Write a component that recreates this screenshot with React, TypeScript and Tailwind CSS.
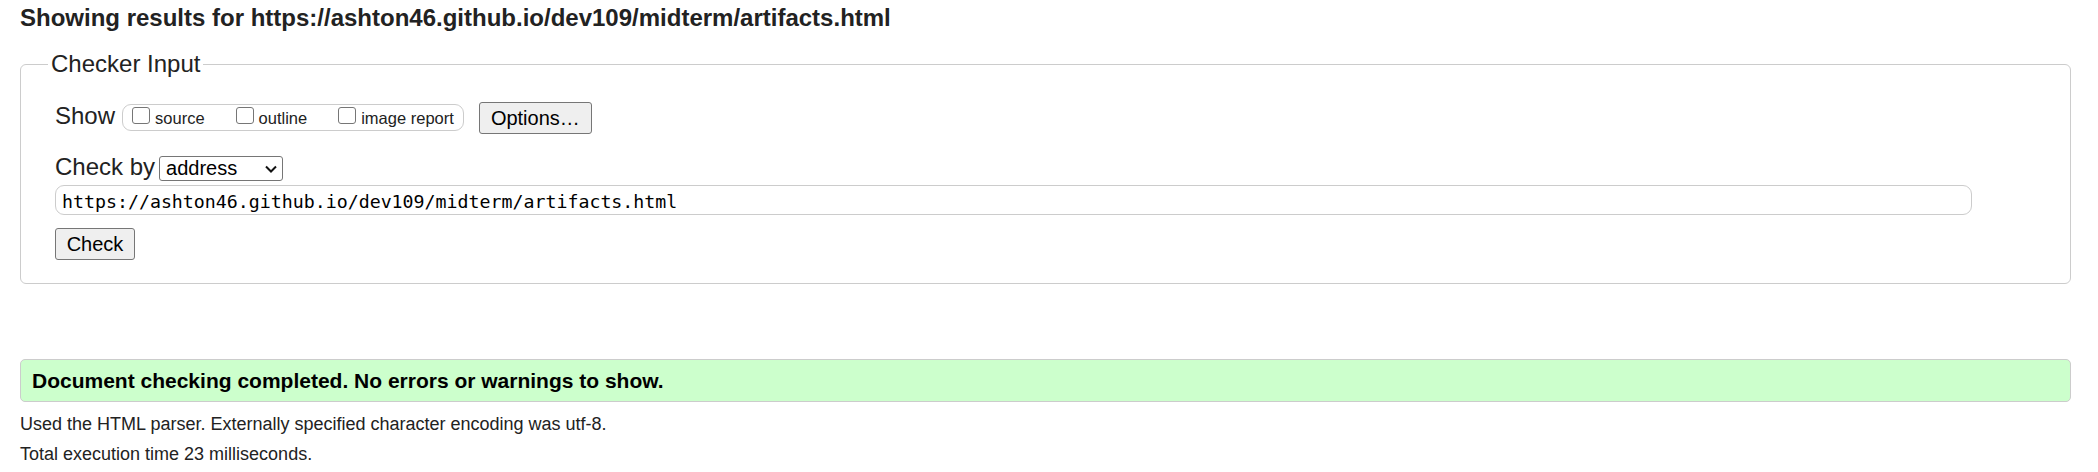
import React from 'react';

const Checkbox: React.FC = () => (
  <span className="mt-[2px] block h-[17px] w-[18px] shrink-0 rounded-[3px] border border-[#767676] bg-white" />
);

const ShowOption: React.FC<{ label: string }> = ({ label }) => (
  <label className="flex items-start">
    <Checkbox />
    <span className="ml-[5px] pt-[4px] text-[16.5px] leading-[19px]">{label}</span>
  </label>
);

const App: React.FC = () => {
  const url = 'https://ashton46.github.io/dev109/midterm/artifacts.html';

  return (
    <div className="min-h-[472px] bg-white pl-[20px] pr-[27px] font-['Liberation_Sans',Arial,sans-serif] text-[#222]">
      <h2 className="pt-[4px] text-[24px] font-bold leading-[28px]">Showing results for {url}</h2>

      <fieldset className="mt-[18px] rounded-[6px] border border-[#ccc] pb-[23px]">
        <legend className="ml-[27px] px-[3px] text-[24px] leading-[28px]">Checker Input</legend>

        <div className="pl-[34px] pt-[24px]">
          {/* show options */}
          <div className="flex items-start">
            <span className="text-[24px] leading-[28px]">Show</span>
            <div className="ml-[7px] mt-[2px] flex h-[27px] items-start gap-[31px] rounded-[9px] border border-[#ccc] px-[9px]">
              <ShowOption label="source" />
              <ShowOption label="outline" />
              <ShowOption label="image report" />
            </div>
            <button className="ml-[15px] h-[32px] w-[113px] rounded-[3px] border border-[#767676] bg-[#efefef] text-[20px] leading-[23px] text-black">
              Options…
            </button>
          </div>

          {/* check by */}
          <div className="mt-[19px] flex items-start">
            <span className="text-[24px] leading-[28px]">Check by</span>
            <div className="ml-[4px] mt-[3px] flex h-[25px] w-[124px] items-center justify-between rounded-[3px] border border-[#767676] bg-white pl-[6px] pr-[5px] text-black">
              <span className="text-[20px] leading-[23px]">address</span>
              <svg width="12" height="8" viewBox="0 0 12 8" fill="none">
                <path d="M1 1.5 L6 6.5 L11 1.5" stroke="#111" strokeWidth="2" />
              </svg>
            </div>
          </div>

          <div className="mt-[4px] flex h-[30px] w-[1917px] items-start rounded-[9px] border border-[#ccc] bg-white pl-[6px] pt-[5px]">
            <span className="font-['DejaVu_Sans_Mono',monospace] text-[18.25px] leading-[21px] text-black">{url}</span>
          </div>

          <button className="mt-[13px] h-[32px] w-[80px] rounded-[3px] border border-[#767676] bg-[#efefef] text-[20px] leading-[23px] text-black">
            Check
          </button>
        </div>
      </fieldset>

      <div className="mt-[75px] h-[43px] rounded-[5px] border border-[#ccc] bg-[#ccffcc] pl-[11px] text-[21px] font-bold leading-[41px] text-black">
        Document checking completed. No errors or warnings to show.
      </div>

      <p className="mt-[7px] text-[18px] leading-[30px]">
        Used the HTML parser. Externally specified character encoding was utf-8.
      </p>
      <p className="text-[18px] leading-[30px]">Total execution time 23 milliseconds.</p>
    </div>
  );
};

export default App;
